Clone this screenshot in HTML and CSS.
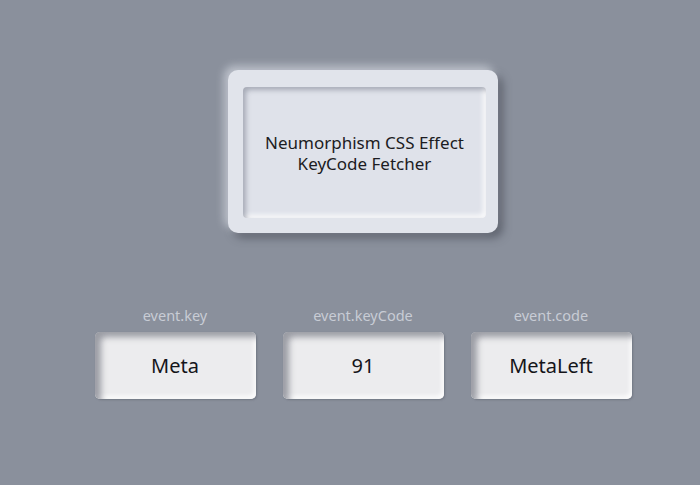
FILE: index.html
```html
<!DOCTYPE html>
<html lang="en">
<head>
<meta charset="utf-8">
<title>Neumorphism KeyCode Fetcher</title>
<link rel="stylesheet" href="styles.css">
</head>
<body>
<main class="page">
  <section class="card">
    <div class="card-inner">
      <p class="title">Neumorphism CSS Effect<br>KeyCode Fetcher</p>
    </div>
  </section>
  <section class="keys">
    <div class="key">
      <span class="key-label">event.key</span>
      <div class="key-box">Meta</div>
    </div>
    <div class="key">
      <span class="key-label">event.keyCode</span>
      <div class="key-box">91</div>
    </div>
    <div class="key">
      <span class="key-label">event.code</span>
      <div class="key-box">MetaLeft</div>
    </div>
  </section>
</main>
</body>
</html>
```
FILE: styles.css
```css
html, body {
  margin: 0;
  padding: 0;
}
body {
  background: #8a909c;
  font-family: "Noto Sans", "Open Sans", sans-serif;
  width: 700px;
  height: 485px;
  overflow: hidden;
}
.page {
  display: flex;
  flex-direction: column;
  align-items: center;
  padding-top: 70px;
  padding-left: 26px;
}
.card {
  width: 270px;
  height: 163px;
  box-sizing: border-box;
  padding: 17px 12px 15px 15px;
  background: #e1e4eb;
  border-radius: 10px;
  box-shadow: -4px -4px 8px rgba(235, 238, 245, 0.55), 5px 5px 9px rgba(60, 64, 75, 0.55);
}
.card-inner {
  height: 100%;
  border-radius: 4px;
  background: #dfe2ea;
  box-shadow: inset 3px 3px 5px rgba(120, 125, 140, 0.55), inset -3px -3px 5px rgba(255, 255, 255, 0.85);
  display: flex;
  align-items: center;
  justify-content: center;
}
.title {
  margin: 0;
  text-align: center;
  font-size: 17px;
  line-height: 21px;
  color: #1c1c22;
}
.keys {
  display: flex;
  gap: 27px;
  margin-top: 74px;
}
.key {
  display: flex;
  flex-direction: column;
  align-items: center;
  width: 161px;
}
.key-label {
  font-size: 14.5px;
  line-height: 16px;
  color: #c8ccd5;
  margin-bottom: 9px;
}
.key-box {
  width: 161px;
  height: 67px;
  border-radius: 5px;
  background: #ececee;
  display: flex;
  align-items: center;
  justify-content: center;
  font-size: 20px;
  color: #15151a;
  box-shadow: inset 6px 5px 6px rgba(110, 114, 125, 0.65), inset -2px -3px 4px rgba(255, 255, 255, 0.9), 1px 1px 2px rgba(70, 74, 85, 0.35);
}
```
